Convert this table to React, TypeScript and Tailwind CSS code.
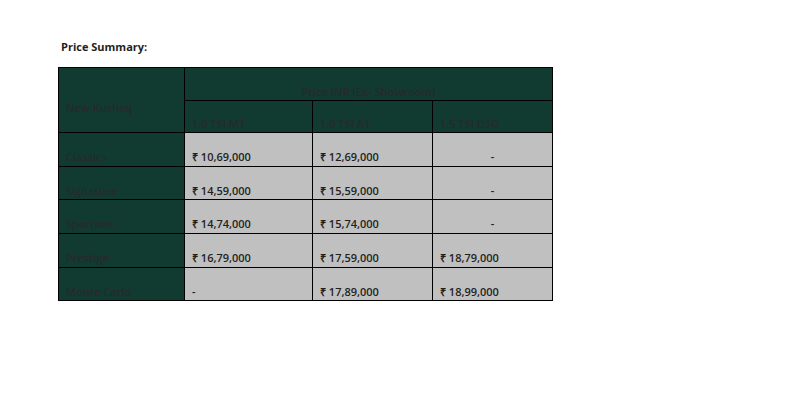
const rows = [
  { name: 'Classic+', mt: '₹ 10,69,000', at: '₹ 12,69,000', dsg: '-', h: 'h-[34px]' },
  { name: 'Signature', mt: '₹ 14,59,000', at: '₹ 15,59,000', dsg: '-', h: 'h-[33px]' },
  { name: 'Sportline', mt: '₹ 14,74,000', at: '₹ 15,74,000', dsg: '-', h: 'h-[34px]' },
  { name: 'Prestige', mt: '₹ 16,79,000', at: '₹ 17,59,000', dsg: '₹ 18,79,000', h: 'h-[34px]' },
  { name: 'Monte Carlo', mt: '-', at: '₹ 17,89,000', dsg: '₹ 18,99,000', h: 'h-[33px]' },
];

const head = 'border border-black bg-[#113a31] text-[#262b29] font-semibold align-middle pt-[14px] px-[7px]';
const cell = 'border border-black bg-[#c0c0c0] text-[#1f1f1f] font-semibold align-middle pt-[14px] px-[7px]';

export default function App() {
  return (
    <div className="w-[790px] h-[415px] bg-white pt-[39px] pl-[58px] font-['Open_Sans','Liberation_Sans',sans-serif] text-[11px] leading-[15px]">
      <h1 className="pl-[3px] font-bold text-[#1f1f1f] text-[11px] leading-[15px]">Price Summary:</h1>

      <table className="mt-[13px] border-collapse border border-black table-fixed w-[494px]">
        <colgroup>
          <col className="w-[126px]" />
          <col className="w-[128px]" />
          <col className="w-[120px]" />
          <col className="w-[120px]" />
        </colgroup>
        <thead>
          <tr className="h-[33px]">
            <th rowSpan={2} className={head + ' text-left'}>New Kushaq</th>
            <th colSpan={3} className={head + ' text-center'}>Price INR (Ex- Showroom)</th>
          </tr>
          <tr className="h-[32px]">
            <th className={head + ' text-left'}>1.0 TSI MT</th>
            <th className={head + ' text-left'}>1.0 TSI AT</th>
            <th className={head + ' text-left'}>1.5 TSI DSG</th>
          </tr>
        </thead>
        <tbody>
          {rows.map((r) => (
            <tr key={r.name} className={r.h}>
              <td className={head + ' text-left'}>{r.name}</td>
              <td className={cell}>{r.mt}</td>
              <td className={cell}>{r.at}</td>
              <td className={cell + (r.dsg === '-' ? ' text-center' : '')}>{r.dsg}</td>
            </tr>
          ))}
        </tbody>
      </table>
    </div>
  );
}
